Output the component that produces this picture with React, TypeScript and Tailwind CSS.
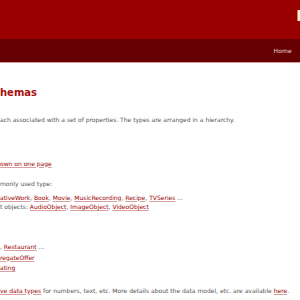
import React from "react";

const L = ({ children }: { children: React.ReactNode }) => (
  <a className="text-[#990000] underline decoration-[#d9a0a0] underline-offset-[1px]">{children}</a>
);

const Row = ({ children, className = "" }: { children?: React.ReactNode; className?: string }) => (
  <div className={"h-[10.5px] leading-[10.5px] whitespace-nowrap " + className}>{children}</div>
);

export default function App() {
  return (
    <div className="w-[300px] h-[300px] overflow-hidden bg-white" style={{ fontFamily: '"DejaVu Sans", "Open Sans", sans-serif' }}>
      <div className="h-[39px] bg-[#990000] flex justify-end pt-[10px]">
        <div className="w-[3px] h-[11px] bg-[#f7eddc] border-l border-[#d08a2a]" />
      </div>
      <div className="h-[23px] bg-[#660000] flex items-center justify-end pr-[8px]">
        <span className="text-[6px] text-[#e8dede] tracking-[0.2px]">Home</span>
      </div>
      <div className="h-[1px] bg-[#d99a9a]" />
      <div className="text-[6px] text-[#555]">
        <div className="mt-[24px] h-[12px] text-[10px] font-bold text-[#aa1111] leading-[12px]">hemas</div>
        <Row className="mt-[16px]">ach associated with a set of properties. The types are arranged in a hierarchy.</Row>
        <Row className="mt-[33px]"><L>own on one page</L></Row>
        <Row className="mt-[10px]">monly used type:</Row>
        <Row className="mt-[3px]"><L>ativeWork</L>, <L>Book</L>, <L>Movie</L>, <L>MusicRecording</L>, <L>Recipe</L>, <L>TVSeries</L> ...</Row>
        <Row className="-mt-[1px]">t objects: <L>AudioObject</L>, <L>ImageObject</L>, <L>VideoObject</L></Row>
        <Row />
        <Row />
        <div className="h-[8.5px]" />
        <Row>, <L>Restaurant</L> ...</Row>
        <Row><L>regateOffer</L></Row>
        <Row><L>ating</L></Row>
        <Row className="mt-[12px]"><L>ve data types</L> for numbers, text, etc. More details about the data model, etc. are available <L>here</L>.</Row>
      </div>
    </div>
  );
}
